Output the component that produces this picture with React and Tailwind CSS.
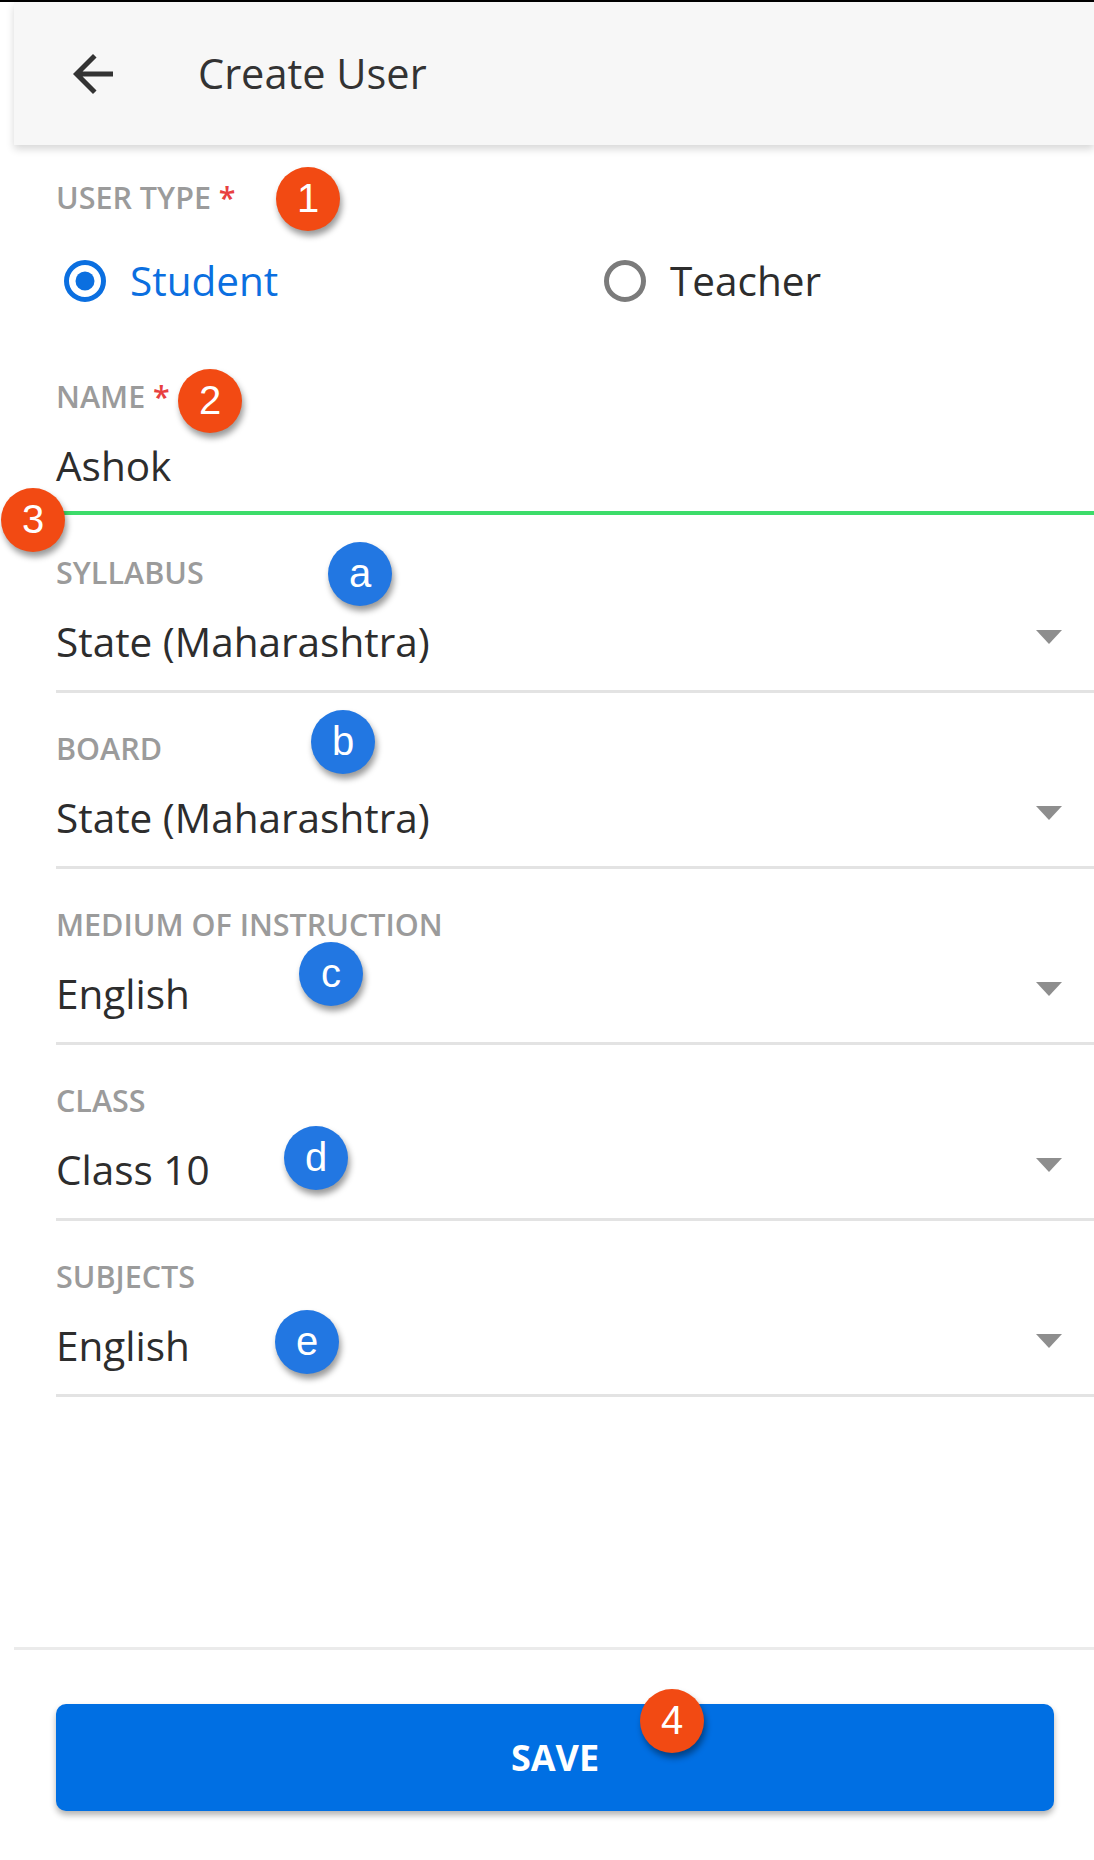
import React from "react";

function Label({ children, required }) {
  return (
    <div className="h-[40px] leading-[40px] text-[30.5px] font-semibold text-[#9b9b9b] whitespace-nowrap">
      {children}
      {required && <span className="text-[#e8403f]"> *</span>}
    </div>
  );
}

function Caret() {
  return (
    <svg width="26" height="14" viewBox="0 0 26 14" className="-translate-y-[5px]">
      <polygon points="0,0 26,0 13,14" fill="#8e8e8e" />
    </svg>
  );
}

function Select({ label, value, first }) {
  return (
    <div className={first ? "pt-[37px] pb-[20px] border-b-[3px] border-[#e3e3e3]" : "pt-[35px] pb-[20px] border-b-[3px] border-[#e3e3e3]"}>
      <Label>{label}</Label>
      <div className="mt-[22px] h-[56px] flex items-center justify-between pr-[32px]">
        <span className="text-[40.5px] leading-[56px] text-[#2d2d2d]">{value}</span>
        <Caret />
      </div>
    </div>
  );
}

function Badge({ className, children }) {
  return (
    <div
      className={
        "absolute w-[64px] h-[64px] rounded-full flex items-center justify-center text-white text-[40px] leading-none font-['Liberation_Sans',Arial,sans-serif] shadow-[2px_5px_6px_rgba(0,0,0,0.4)] " +
        className
      }
    >
      <span className="-translate-y-[1px]">{children}</span>
    </div>
  );
}

export default function App() {
  return (
    <div className="relative w-[1094px] h-[1860px] bg-white flex flex-col overflow-hidden font-['Open_Sans',sans-serif]">
      <div className="h-[2px] bg-black shrink-0" />
      <div className="relative z-10 ml-[14px] h-[143px] shrink-0 bg-[#f7f7f7] flex items-center shadow-[0_4px_8px_rgba(0,0,0,0.16)]">
        <svg className="ml-[49px]" width="60" height="60" viewBox="0 0 24 24">
          <path d="M20 11H7.83l5.59-5.59L12 4l-8 8 8 8 1.41-1.41L7.83 13H20v-2z" fill="#333333" />
        </svg>
        <span className="ml-[75px] text-[41.5px] font-medium text-[#333333] leading-none">Create User</span>
      </div>

      <div className="flex-1 pl-[56px]">
        <div className="pt-[32px]">
          <Label required>USER TYPE</Label>
          <div className="mt-[36px] h-[56px] flex items-center">
            <div className="w-[548px] pl-[8px] flex items-center gap-[24px]">
              <svg width="42" height="42" viewBox="0 0 42 42">
                <circle cx="21" cy="21" r="18.5" fill="none" stroke="#0b6fe0" strokeWidth="5" />
                <circle cx="21" cy="21" r="9.5" fill="#0b6fe0" />
              </svg>
              <span className="text-[40.5px] leading-[56px] text-[#0b6fe0]">Student</span>
            </div>
            <div className="flex items-center gap-[24px]">
              <svg width="42" height="42" viewBox="0 0 42 42">
                <circle cx="21" cy="21" r="18.5" fill="none" stroke="#7b7b7b" strokeWidth="5" />
              </svg>
              <span className="text-[40.5px] leading-[56px] text-[#2d2d2d]">Teacher</span>
            </div>
          </div>
          <div className="mt-[67px]">
            <Label required>NAME</Label>
          </div>
          <div className="mt-[22px] h-[56px] text-[40.5px] leading-[56px] text-[#2d2d2d]">Ashok</div>
          <div className="mt-[17px] h-[4px] bg-[#3ddc6a]" />
        </div>

        <Select first label="SYLLABUS" value="State (Maharashtra)" />
        <Select label="BOARD" value="State (Maharashtra)" />
        <Select label="MEDIUM OF INSTRUCTION" value="English" />
        <Select label="CLASS" value="Class 10" />
        <Select label="SUBJECTS" value="English" />
      </div>

      <div className="ml-[14px] shrink-0 border-t-[3px] border-[#ebebeb] pt-[54px] pb-[49px]">
        <button className="ml-[42px] w-[998px] h-[107px] rounded-[10px] bg-[#006fe3] shadow-[0_4px_6px_rgba(0,0,0,0.3)] flex items-center justify-center">
          <span className="text-white text-[36px] font-bold">SAVE</span>
        </button>
      </div>

      <Badge className="left-[276px] top-[167px] bg-[#f24a13]">1</Badge>
      <Badge className="left-[178px] top-[369px] bg-[#f24a13]">2</Badge>
      <Badge className="left-[1px] top-[488px] bg-[#f24a13]">3</Badge>
      <Badge className="left-[640px] top-[1689px] bg-[#f24a13]">4</Badge>
      <Badge className="left-[328px] top-[542px] bg-[#2277e2]">a</Badge>
      <Badge className="left-[311px] top-[710px] bg-[#2277e2]">b</Badge>
      <Badge className="left-[299px] top-[942px] bg-[#2277e2]">c</Badge>
      <Badge className="left-[284px] top-[1126px] bg-[#2277e2]">d</Badge>
      <Badge className="left-[275px] top-[1310px] bg-[#2277e2]">e</Badge>
    </div>
  );
}
